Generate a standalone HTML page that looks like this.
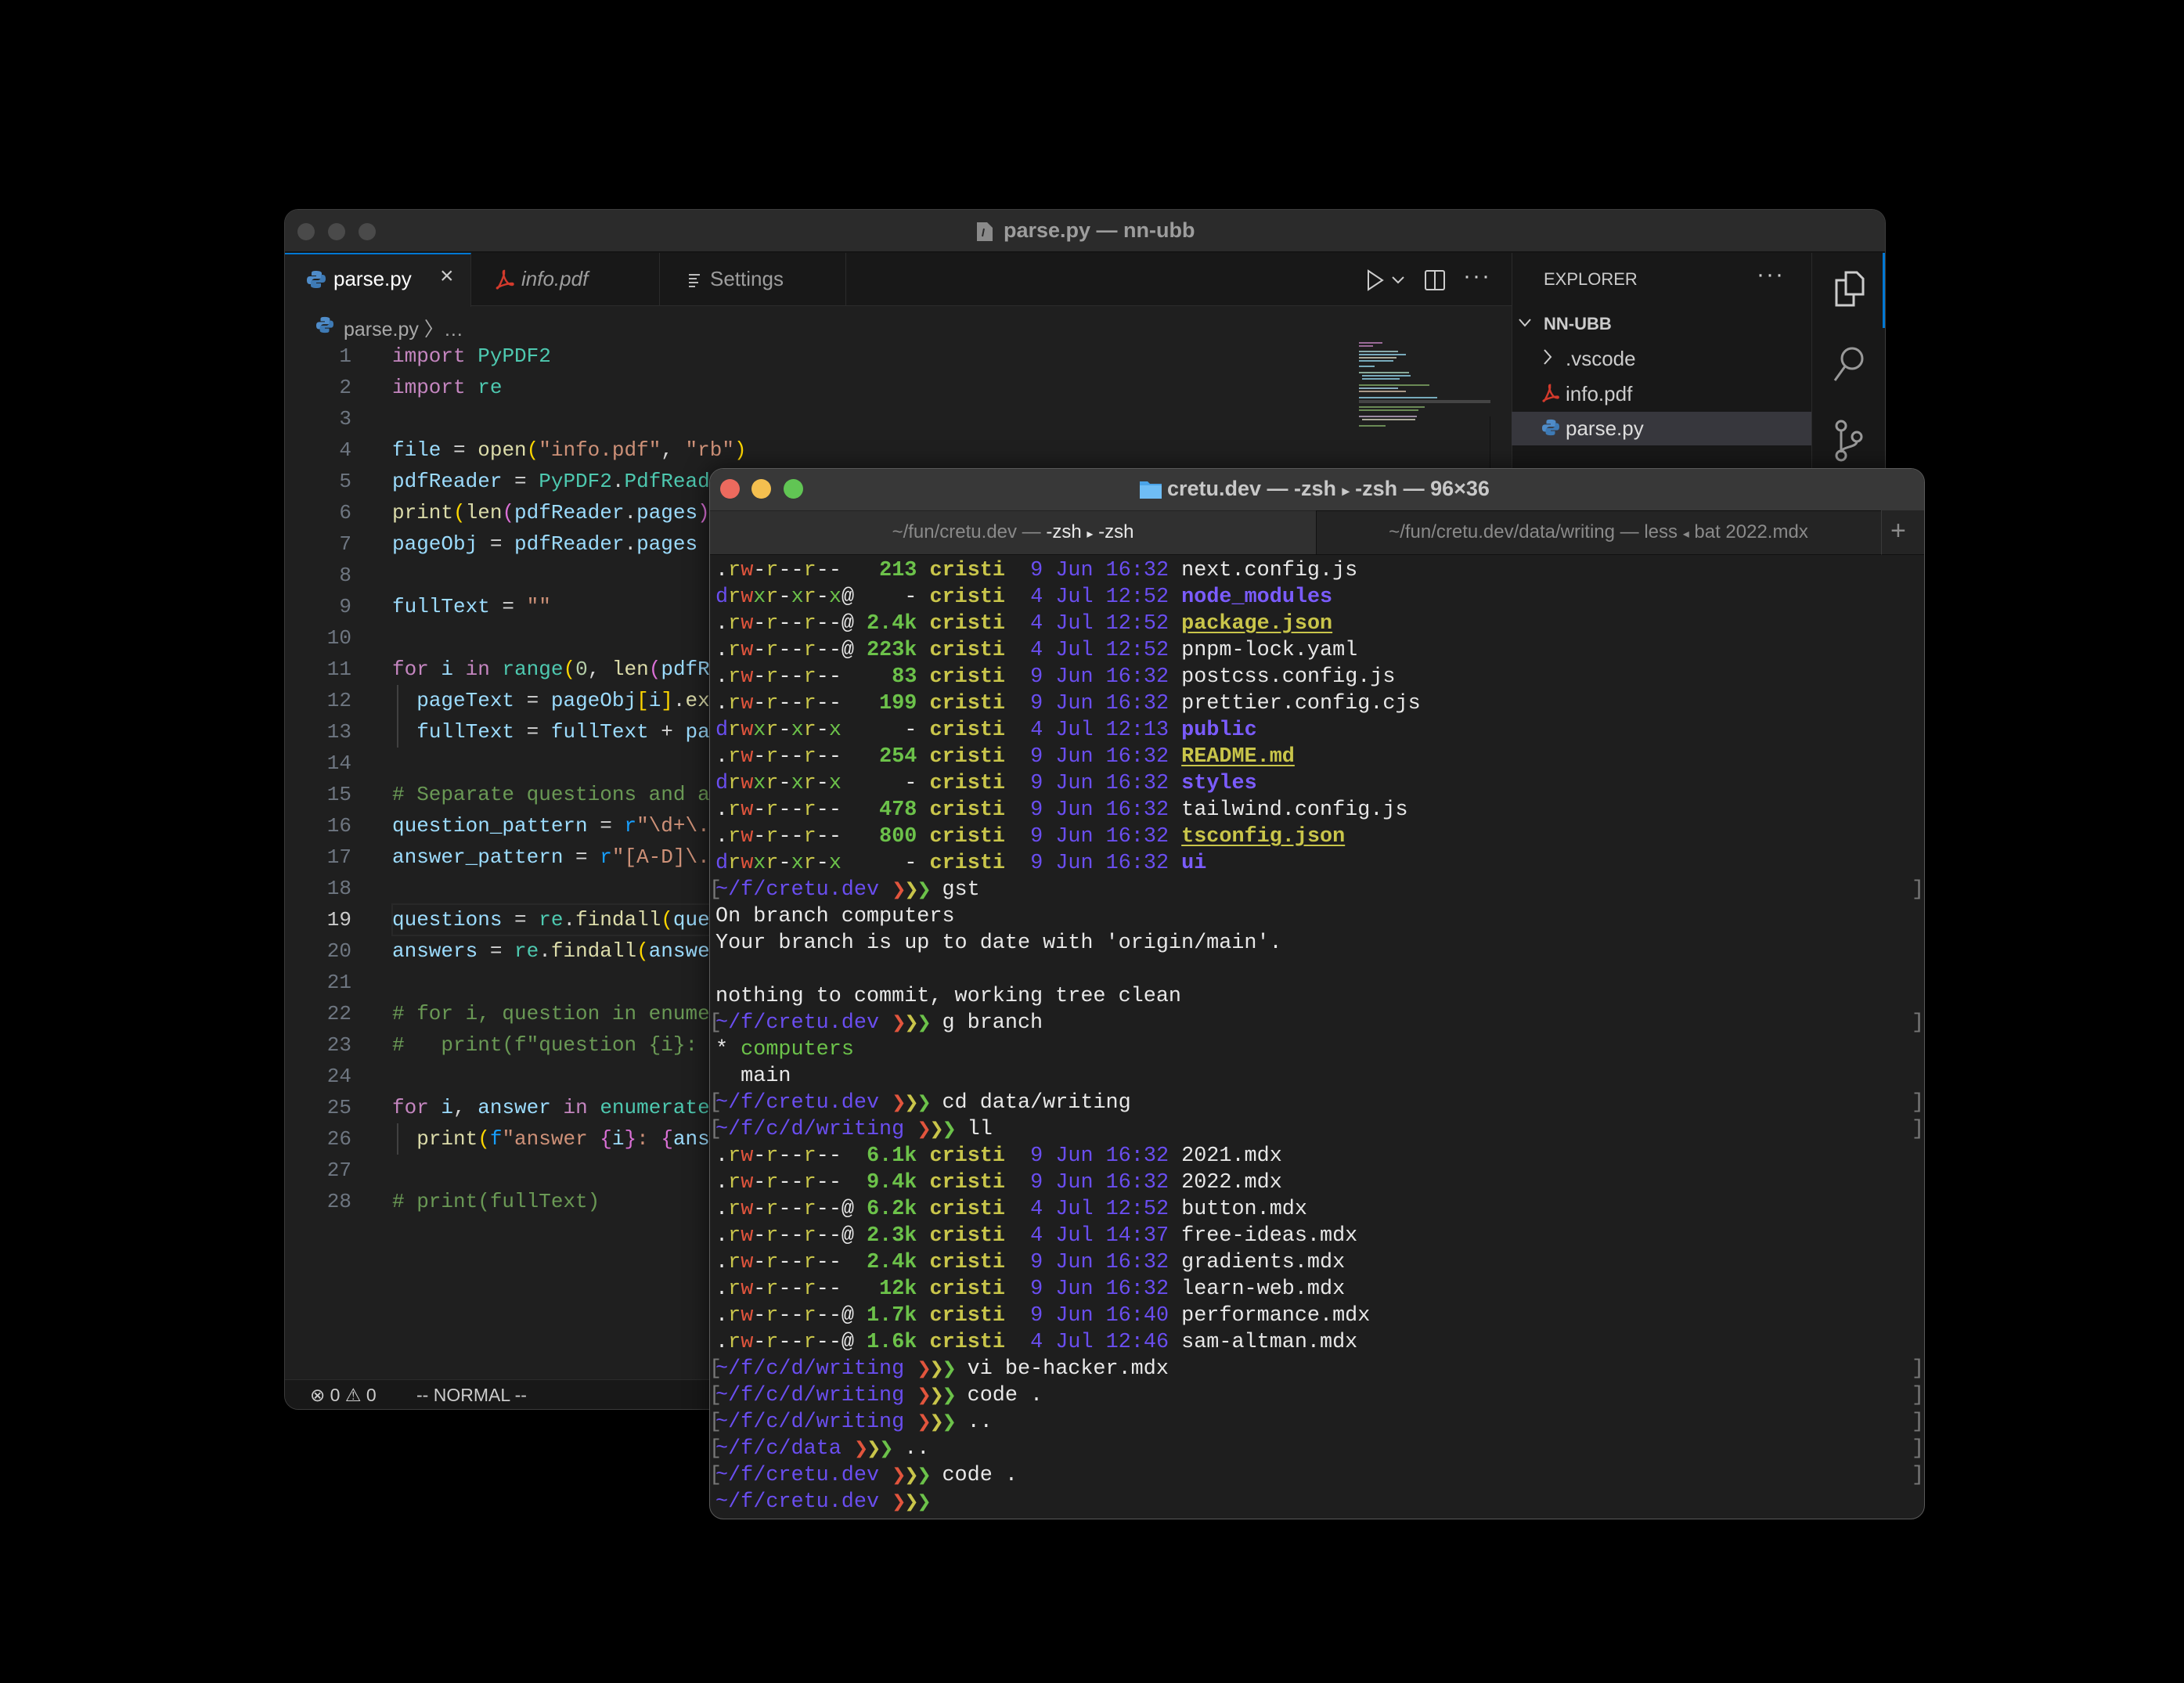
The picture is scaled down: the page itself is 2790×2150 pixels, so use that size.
<!DOCTYPE html>
<html><head><meta charset="utf-8"><style>
*{margin:0;padding:0;box-sizing:border-box}
body{width:2790px;height:2150px;background:#000;position:relative;overflow:hidden;font-family:"Liberation Sans",sans-serif}
.abs{position:absolute}
.mono{font-family:"Liberation Mono","DejaVu Sans Mono",monospace}
#vs{left:363px;top:267px;width:2046px;height:1534px;border-radius:18px;background:#1f1f1f;border:1px solid #3c3c3c;overflow:hidden}
.code{white-space:pre;font-size:26px;line-height:40px}
.k{color:#c586c0}.m{color:#4ec9b0}.v{color:#9cdcfe}.f{color:#dcdcaa}.s{color:#ce9178}.n{color:#b5cea8}.c{color:#6a9955}.o{color:#d4d4d4}.b1{color:#ffd700}.b2{color:#da70d6}.b3{color:#179fff}
#term{left:906px;top:598px;width:1553px;height:1343px;border-radius:18px;background:#1e1e1e;border:1px solid #5a5a5a;overflow:hidden;box-shadow:0 0 30px rgba(0,0,0,.6)}
.t{white-space:pre;font-size:26.8px;line-height:34px;color:#e8e8e8;height:34px;position:relative}
.Y{color:#c9c54a}.R{color:#e2553d}.G{color:#6cc24a}.P{color:#6a4ef0}.Q{color:#7b5cff;font-weight:bold}.S{color:#6cc24a;font-weight:bold}.U{color:#c9c54a;font-weight:bold}.L{color:#c9c54a;font-weight:bold;text-decoration:underline;text-underline-offset:4px}
.ch{display:inline-block;width:16.08px;text-align:center;font-family:"DejaVu Sans",sans-serif;font-size:22px}
.lb{position:absolute;left:-8px;color:#777}
.rb{position:absolute;left:1528px;color:#777}
</style></head><body>

<div id="vs" class="abs">
  <div class="abs" style="left:0;top:0;width:2046px;height:55px;background:#2b2b2b;border-bottom:2px solid #141414"></div>
  <div class="abs" style="left:16px;top:17px;width:22px;height:22px;border-radius:50%;background:#4a4a4a"></div>
  <div class="abs" style="left:55px;top:17px;width:22px;height:22px;border-radius:50%;background:#4a4a4a"></div>
  <div class="abs" style="left:94px;top:17px;width:22px;height:22px;border-radius:50%;background:#4a4a4a"></div>
  <svg class="abs" style="left:882px;top:14px" width="24" height="28" viewBox="0 0 24 28"><path d="M2 2h13l7 7v17H2z" fill="#8a8a8a"/><path d="M11 10l-2 10" stroke="#2b2b2b" stroke-width="2"/></svg>
  <div class="abs" style="left:918px;top:11px;font-size:27px;color:#9d9d9d;font-weight:bold">parse.py — nn-ubb</div>
  <div class="abs" style="left:0;top:55px;width:1567px;height:68px;background:#181818;border-bottom:1px solid #2b2b2b"></div>
  <div class="abs" style="left:0;top:55px;width:238px;height:69px;background:#1f1f1f;border-right:1px solid #2b2b2b;border-top:2px solid #0078d4"></div>
  <div class="abs" style="left:238px;top:55px;width:241px;height:68px;border-right:1px solid #2b2b2b"></div>
  <div class="abs" style="left:479px;top:55px;width:238px;height:68px;border-right:1px solid #2b2b2b"></div>
  <svg class="abs" style="left:28px;top:77px" width="24" height="24" viewBox="0 0 24 24"><path d="M11 1c-5 0-5 2-5 3v3h6v1H4C1 8 0 10 0 13s1 5 4 5h2v-3c0-2 2-4 4-4h6c2 0 3-1 3-3V4c0-2-3-3-8-3z" fill="#4f8cc9"/><path d="M13 23c5 0 5-2 5-3v-3h-6v-1h8c3 0 4-2 4-5s-1-5-4-5h-2v3c0 2-2 4-4 4H8c-2 0-3 1-3 3v4c0 2 3 3 8 3z" fill="#3e7ab5"/></svg>
  <div class="abs" style="left:62px;top:73px;font-size:26px;color:#fff">parse.py</div>
  <div class="abs" style="left:198px;top:68px;font-size:30px;color:#ccc">×</div>
  <svg class="abs" style="left:268px;top:76px" width="26" height="26" viewBox="0 0 26 26"><path d="M12 2c-2 0-1 6 1 10s5 8 9 8c2 0 2-2 0-2-4 0-12 2-18 5-2 1-1 2 0 1 3-4 7-14 8-18 0-3 0-4 0-4z" fill="none" stroke="#d33a2c" stroke-width="2.4"/></svg>
  <div class="abs" style="left:302px;top:73px;font-size:26px;color:#9d9d9d;font-style:italic">info.pdf</div>
  <svg class="abs" style="left:514px;top:80px" width="20" height="20" viewBox="0 0 20 20"><path d="M2 3h14M2 8h10M2 13h12M2 18h8" stroke="#bbb" stroke-width="2"/></svg>
  <div class="abs" style="left:543px;top:73px;font-size:26px;color:#9d9d9d">Settings</div>
  <svg class="abs" style="left:1378px;top:75px" width="30" height="30" viewBox="0 0 30 30"><path d="M6 3l18 12-18 12z" fill="none" stroke="#ccc" stroke-width="2"/></svg>
  <svg class="abs" style="left:1413px;top:82px" width="18" height="14" viewBox="0 0 18 14"><path d="M2 4l7 7 7-7" fill="none" stroke="#ccc" stroke-width="2"/></svg>
  <svg class="abs" style="left:1455px;top:76px" width="28" height="28" viewBox="0 0 28 28"><rect x="2" y="2" width="24" height="24" rx="2" fill="none" stroke="#ccc" stroke-width="2"/><path d="M14 2v24" stroke="#ccc" stroke-width="2"/></svg>
  <div class="abs" style="left:1505px;top:68px;font-size:30px;color:#ccc;letter-spacing:2px">···</div>
  <svg class="abs" style="left:40px;top:136px" width="22" height="22" viewBox="0 0 24 24"><path d="M11 1c-5 0-5 2-5 3v3h6v1H4C1 8 0 10 0 13s1 5 4 5h2v-3c0-2 2-4 4-4h6c2 0 3-1 3-3V4c0-2-3-3-8-3z" fill="#4f8cc9"/><path d="M13 23c5 0 5-2 5-3v-3h-6v-1h8c3 0 4-2 4-5s-1-5-4-5h-2v3c0 2-2 4-4 4H8c-2 0-3 1-3 3v4c0 2 3 3 8 3z" fill="#3e7ab5"/></svg>
  <div class="abs" style="left:75px;top:133px;font-size:25px;color:#a9a9a9">parse.py 〉…</div>
  <div class="abs" style="left:136px;top:886px;width:1430px;height:42px;border:2px solid #282828"></div>
  <div class="abs" style="left:143px;top:607px;width:2px;height:80px;background:#404040"></div>
  <div class="abs" style="left:143px;top:1167px;width:2px;height:40px;background:#404040"></div>
  <div class="abs mono code" style="left:17px;top:167px;width:68px;text-align:right;color:#6e7681">1
2
3
4
5
6
7
8
9
10
11
12
13
14
15
16
17
18
<span style="color:#ccc">19</span>
20
21
22
23
24
25
26
27
28</div>
  <div class="abs mono code" style="left:137px;top:167px;color:#d4d4d4"><span class="k">import</span> <span class="m">PyPDF2</span>
<span class="k">import</span> <span class="m">re</span>

<span class="v">file</span> = <span class="f">open</span><span class="b1">(</span><span class="s">"info.pdf"</span>, <span class="s">"rb"</span><span class="b1">)</span>
<span class="v">pdfReader</span> = <span class="m">PyPDF2</span>.<span class="m">PdfReader</span><span class="b1">(</span><span class="v">file</span><span class="b1">)</span>
<span class="f">print</span><span class="b1">(</span><span class="f">len</span><span class="b2">(</span><span class="v">pdfReader</span>.<span class="v">pages</span><span class="b2">)</span><span class="b1">)</span>
<span class="v">pageObj</span> = <span class="v">pdfReader</span>.<span class="v">pages</span>

<span class="v">fullText</span> = <span class="s">""</span>

<span class="k">for</span> <span class="v">i</span> <span class="k">in</span> <span class="m">range</span><span class="b1">(</span><span class="n">0</span>, <span class="f">len</span><span class="b2">(</span><span class="v">pdfReader</span>.<span class="v">pages</span><span class="b2">)</span><span class="b1">)</span>:
  <span class="v">pageText</span> = <span class="v">pageObj</span><span class="b1">[</span><span class="v">i</span><span class="b1">]</span>.<span class="f">extract_text</span><span class="b1">()</span>
  <span class="v">fullText</span> = <span class="v">fullText</span> + <span class="v">pageText</span>

<span class="c"># Separate questions and answers using regex patterns</span>
<span class="v">question_pattern</span> = <span class="b3">r</span><span class="s">"\d+\..*?"</span>
<span class="v">answer_pattern</span> = <span class="b3">r</span><span class="s">"[A-D]\..*?"</span>

<span class="v">questions</span> = <span class="m">re</span>.<span class="f">findall</span><span class="b1">(</span><span class="v">question_pattern</span>, <span class="v">fullText</span><span class="b1">)</span>
<span class="v">answers</span> = <span class="m">re</span>.<span class="f">findall</span><span class="b1">(</span><span class="v">answer_pattern</span>, <span class="v">fullText</span><span class="b1">)</span>

<span class="c"># for i, question in enumerate(questions, start=1):</span>
<span class="c">#   print(f"question {i}: {question.strip()}\n")</span>

<span class="k">for</span> <span class="v">i</span>, <span class="v">answer</span> <span class="k">in</span> <span class="m">enumerate</span><span class="b1">(</span><span class="v">answers</span>, <span class="v">start</span>=<span class="n">1</span><span class="b1">)</span>:
  <span class="f">print</span><span class="b1">(</span><span class="b3">f</span><span class="s">"answer </span><span class="b2">{</span><span class="v">i</span><span class="b2">}</span><span class="s">: </span><span class="b2">{</span><span class="v">answer</span>.<span class="f">strip</span><span class="b2">}</span><span class="s">\n"</span><span class="b1">)</span>

<span class="c"># print(fullText)</span></div>
  <div class="abs" style="left:1372px;top:169px;width:168px;height:120px">
    <div class="abs" style="left:0;top:0;width:30px;height:2px;background:#9a6a98"></div>
    <div class="abs" style="left:0;top:4px;width:18px;height:2px;background:#9a6a98"></div>
    <div class="abs" style="left:0;top:11px;width:50px;height:2px;background:#8aa"></div>
    <div class="abs" style="left:0;top:15px;width:60px;height:2px;background:#7ab"></div>
    <div class="abs" style="left:0;top:19px;width:48px;height:2px;background:#aa9"></div>
    <div class="abs" style="left:0;top:23px;width:44px;height:2px;background:#7ab"></div>
    <div class="abs" style="left:0;top:30px;width:20px;height:2px;background:#7ab"></div>
    <div class="abs" style="left:0;top:38px;width:64px;height:2px;background:#8a9"></div>
    <div class="abs" style="left:4px;top:42px;width:62px;height:2px;background:#7ab"></div>
    <div class="abs" style="left:4px;top:46px;width:48px;height:2px;background:#7ab"></div>
    <div class="abs" style="left:0;top:54px;width:90px;height:2px;background:#6a8a55"></div>
    <div class="abs" style="left:0;top:58px;width:50px;height:2px;background:#8ab"></div>
    <div class="abs" style="left:0;top:62px;width:60px;height:2px;background:#a98"></div>
    <div class="abs" style="left:0;top:70px;width:100px;height:2px;background:#7ab"></div>
    <div class="abs" style="left:0;top:74px;width:168px;height:4px;background:#444"></div>
    <div class="abs" style="left:0;top:82px;width:84px;height:2px;background:#6a8a55"></div>
    <div class="abs" style="left:0;top:86px;width:76px;height:2px;background:#6a8a55"></div>
    <div class="abs" style="left:0;top:94px;width:74px;height:2px;background:#9a8aa0"></div>
    <div class="abs" style="left:4px;top:98px;width:68px;height:2px;background:#aa9"></div>
    <div class="abs" style="left:0;top:106px;width:34px;height:2px;background:#6a8a55"></div>
  </div>
  <div class="abs" style="left:1539px;top:264px;width:28px;height:1230px;border-left:1px solid #111"></div>
  <div class="abs" style="left:1567px;top:55px;width:383px;height:1439px;background:#181818;border-left:1px solid #2b2b2b"></div>
  <div class="abs" style="left:1608px;top:76px;font-size:22px;color:#ccc">EXPLORER</div>
  <div class="abs" style="left:1880px;top:66px;font-size:30px;color:#ccc;letter-spacing:2px">···</div>
  <svg class="abs" style="left:1575px;top:137px" width="18" height="14" viewBox="0 0 18 14"><path d="M2 3l7 8 7-8" fill="none" stroke="#ccc" stroke-width="2"/></svg>
  <div class="abs" style="left:1608px;top:133px;font-size:22px;color:#ccc;font-weight:bold">NN-UBB</div>
  <svg class="abs" style="left:1607px;top:177px" width="12" height="22" viewBox="0 0 12 22"><path d="M2 2l8 9-8 9" fill="none" stroke="#ccc" stroke-width="2"/></svg>
  <div class="abs" style="left:1636px;top:175px;font-size:26px;color:#ccc">.vscode</div>
  <svg class="abs" style="left:1605px;top:222px" width="24" height="24" viewBox="0 0 26 26"><path d="M12 2c-2 0-1 6 1 10s5 8 9 8c2 0 2-2 0-2-4 0-12 2-18 5-2 1-1 2 0 1 3-4 7-14 8-18 0-3 0-4 0-4z" fill="none" stroke="#d33a2c" stroke-width="2.6"/></svg>
  <div class="abs" style="left:1636px;top:220px;font-size:26px;color:#ccc">info.pdf</div>
  <div class="abs" style="left:1567px;top:258px;width:383px;height:43px;background:#37373d"></div>
  <svg class="abs" style="left:1606px;top:267px" width="22" height="22" viewBox="0 0 24 24"><path d="M11 1c-5 0-5 2-5 3v3h6v1H4C1 8 0 10 0 13s1 5 4 5h2v-3c0-2 2-4 4-4h6c2 0 3-1 3-3V4c0-2-3-3-8-3z" fill="#4f8cc9"/><path d="M13 23c5 0 5-2 5-3v-3h-6v-1h8c3 0 4-2 4-5s-1-5-4-5h-2v3c0 2-2 4-4 4H8c-2 0-3 1-3 3v4c0 2 3 3 8 3z" fill="#3e7ab5"/></svg>
  <div class="abs" style="left:1636px;top:264px;font-size:26px;color:#ddd">parse.py</div>
  <div class="abs" style="left:1950px;top:55px;width:96px;height:1439px;background:#181818;border-left:1px solid #2b2b2b"></div>
  <div class="abs" style="left:2041px;top:55px;width:4px;height:96px;background:#0078d4"></div>
  <svg class="abs" style="left:1974px;top:76px" width="48" height="50" viewBox="0 0 48 50"><path d="M20 4h14l8 8v20H20z" fill="none" stroke="#ccc" stroke-width="3"/><path d="M20 14H8v32h22v-14" fill="none" stroke="#ccc" stroke-width="3"/></svg>
  <svg class="abs" style="left:1974px;top:172px" width="48" height="52" viewBox="0 0 48 52"><circle cx="28" cy="18" r="13" fill="none" stroke="#999" stroke-width="3"/><path d="M19 28L6 46" stroke="#999" stroke-width="3"/></svg>
  <svg class="abs" style="left:1974px;top:268px" width="48" height="56" viewBox="0 0 48 56"><circle cx="14" cy="8" r="6" fill="none" stroke="#999" stroke-width="3"/><circle cx="34" cy="22" r="6" fill="none" stroke="#999" stroke-width="3"/><circle cx="14" cy="46" r="6" fill="none" stroke="#999" stroke-width="3"/><path d="M14 14v26M34 28c0 8-20 6-20 14" fill="none" stroke="#999" stroke-width="3"/></svg>
  <div class="abs" style="left:0;top:1494px;width:2046px;height:40px;background:#181818;border-top:1px solid #2b2b2b"></div>
  <div class="abs" style="left:32px;top:1501px;font-size:23px;color:#ccc;white-space:pre">⊗ 0 ⚠ 0</div>
  <div class="abs" style="left:168px;top:1501px;font-size:23px;color:#ccc">-- NORMAL --</div>
</div>

<div id="term" class="abs">
  <div class="abs" style="left:0;top:0;width:1553px;height:53px;background:#383838"></div>
  <div class="abs" style="left:13px;top:13px;width:25px;height:25px;border-radius:50%;background:#ec6a5e"></div>
  <div class="abs" style="left:53px;top:13px;width:25px;height:25px;border-radius:50%;background:#f4bf4f"></div>
  <div class="abs" style="left:94px;top:13px;width:25px;height:25px;border-radius:50%;background:#61c554"></div>
  <svg class="abs" style="left:548px;top:12px" width="30" height="28" viewBox="0 0 30 28"><path d="M1 4h10l3 3h15v19H1z" fill="#4aa3e8"/><path d="M1 9h28v17H1z" fill="#6fbdf5"/></svg>
  <div class="abs" style="left:584px;top:10px;font-size:27px;color:#c8c8c8;font-weight:bold;white-space:pre">cretu.dev — -zsh <span style="font-size:18px">▸</span> -zsh — 96×36</div>
  <div class="abs" style="left:0;top:53px;width:774px;height:57px;background:#303030;border-top:1px solid #222;border-bottom:1px solid #111"></div>
  <div class="abs" style="left:774px;top:53px;width:722px;height:57px;background:#242424;border-top:1px solid #111;border-left:1px solid #111;border-bottom:1px solid #111"></div>
  <div class="abs" style="left:1496px;top:53px;width:57px;height:57px;background:#242424;border-left:1px solid #3a3a3a;border-bottom:1px solid #111"></div>
  <div class="abs" style="left:0;top:67px;width:774px;text-align:center;font-size:24px;color:#8a8a8a;white-space:pre">~/fun/cretu.dev — <span style="color:#e8e8e8">-zsh <span style="font-size:16px">▸</span> -zsh</span></div>
  <div class="abs" style="left:774px;top:67px;width:722px;text-align:center;font-size:24px;color:#8a8a8a;white-space:pre">~/fun/cretu.dev/data/writing — less <span style="font-size:16px">◂</span> bat 2022.mdx</div>
  <div class="abs" style="left:1508px;top:60px;font-size:34px;color:#8a8a8a">+</div>
  <div class="abs mono" style="left:7px;top:113px">
<div class="t">.<span class=Y>r</span><span class=R>w</span>-<span class=Y>r</span>--<span class=Y>r</span>--   <span class=S>213</span> <span class=U>cristi</span>  <span class=P>9 Jun 16:32</span> next.config.js</div>
<div class="t"><span class=P>d</span><span class=Y>r</span><span class=R>w</span><span class=G>x</span><span class=Y>r</span>-<span class=G>x</span><span class=Y>r</span>-<span class=G>x</span>@    - <span class=U>cristi</span>  <span class=P>4 Jul 12:52</span> <span class=Q>node_modules</span></div>
<div class="t">.<span class=Y>r</span><span class=R>w</span>-<span class=Y>r</span>--<span class=Y>r</span>--@ <span class=S>2.4k</span> <span class=U>cristi</span>  <span class=P>4 Jul 12:52</span> <span class=L>package.json</span></div>
<div class="t">.<span class=Y>r</span><span class=R>w</span>-<span class=Y>r</span>--<span class=Y>r</span>--@ <span class=S>223k</span> <span class=U>cristi</span>  <span class=P>4 Jul 12:52</span> pnpm-lock.yaml</div>
<div class="t">.<span class=Y>r</span><span class=R>w</span>-<span class=Y>r</span>--<span class=Y>r</span>--    <span class=S>83</span> <span class=U>cristi</span>  <span class=P>9 Jun 16:32</span> postcss.config.js</div>
<div class="t">.<span class=Y>r</span><span class=R>w</span>-<span class=Y>r</span>--<span class=Y>r</span>--   <span class=S>199</span> <span class=U>cristi</span>  <span class=P>9 Jun 16:32</span> prettier.config.cjs</div>
<div class="t"><span class=P>d</span><span class=Y>r</span><span class=R>w</span><span class=G>x</span><span class=Y>r</span>-<span class=G>x</span><span class=Y>r</span>-<span class=G>x</span>     - <span class=U>cristi</span>  <span class=P>4 Jul 12:13</span> <span class=Q>public</span></div>
<div class="t">.<span class=Y>r</span><span class=R>w</span>-<span class=Y>r</span>--<span class=Y>r</span>--   <span class=S>254</span> <span class=U>cristi</span>  <span class=P>9 Jun 16:32</span> <span class=L>README.md</span></div>
<div class="t"><span class=P>d</span><span class=Y>r</span><span class=R>w</span><span class=G>x</span><span class=Y>r</span>-<span class=G>x</span><span class=Y>r</span>-<span class=G>x</span>     - <span class=U>cristi</span>  <span class=P>9 Jun 16:32</span> <span class=Q>styles</span></div>
<div class="t">.<span class=Y>r</span><span class=R>w</span>-<span class=Y>r</span>--<span class=Y>r</span>--   <span class=S>478</span> <span class=U>cristi</span>  <span class=P>9 Jun 16:32</span> tailwind.config.js</div>
<div class="t">.<span class=Y>r</span><span class=R>w</span>-<span class=Y>r</span>--<span class=Y>r</span>--   <span class=S>800</span> <span class=U>cristi</span>  <span class=P>9 Jun 16:32</span> <span class=L>tsconfig.json</span></div>
<div class="t"><span class=P>d</span><span class=Y>r</span><span class=R>w</span><span class=G>x</span><span class=Y>r</span>-<span class=G>x</span><span class=Y>r</span>-<span class=G>x</span>     - <span class=U>cristi</span>  <span class=P>9 Jun 16:32</span> <span class=Q>ui</span></div>
<div class="t"><span class=lb>[</span><span class=P>~/f/cretu.dev</span> <span class="ch R">❯</span><span class="ch Y">❯</span><span class="ch G">❯</span> gst<span class=rb>]</span></div>
<div class="t">On branch computers</div>
<div class="t">Your branch is up to date with 'origin/main'.</div>
<div class="t"> </div>
<div class="t">nothing to commit, working tree clean</div>
<div class="t"><span class=lb>[</span><span class=P>~/f/cretu.dev</span> <span class="ch R">❯</span><span class="ch Y">❯</span><span class="ch G">❯</span> g branch<span class=rb>]</span></div>
<div class="t">* <span class=G>computers</span></div>
<div class="t">  main</div>
<div class="t"><span class=lb>[</span><span class=P>~/f/cretu.dev</span> <span class="ch R">❯</span><span class="ch Y">❯</span><span class="ch G">❯</span> cd data/writing<span class=rb>]</span></div>
<div class="t"><span class=lb>[</span><span class=P>~/f/c/d/writing</span> <span class="ch R">❯</span><span class="ch Y">❯</span><span class="ch G">❯</span> ll<span class=rb>]</span></div>
<div class="t">.<span class=Y>r</span><span class=R>w</span>-<span class=Y>r</span>--<span class=Y>r</span>--  <span class=S>6.1k</span> <span class=U>cristi</span>  <span class=P>9 Jun 16:32</span> 2021.mdx</div>
<div class="t">.<span class=Y>r</span><span class=R>w</span>-<span class=Y>r</span>--<span class=Y>r</span>--  <span class=S>9.4k</span> <span class=U>cristi</span>  <span class=P>9 Jun 16:32</span> 2022.mdx</div>
<div class="t">.<span class=Y>r</span><span class=R>w</span>-<span class=Y>r</span>--<span class=Y>r</span>--@ <span class=S>6.2k</span> <span class=U>cristi</span>  <span class=P>4 Jul 12:52</span> button.mdx</div>
<div class="t">.<span class=Y>r</span><span class=R>w</span>-<span class=Y>r</span>--<span class=Y>r</span>--@ <span class=S>2.3k</span> <span class=U>cristi</span>  <span class=P>4 Jul 14:37</span> free-ideas.mdx</div>
<div class="t">.<span class=Y>r</span><span class=R>w</span>-<span class=Y>r</span>--<span class=Y>r</span>--  <span class=S>2.4k</span> <span class=U>cristi</span>  <span class=P>9 Jun 16:32</span> gradients.mdx</div>
<div class="t">.<span class=Y>r</span><span class=R>w</span>-<span class=Y>r</span>--<span class=Y>r</span>--   <span class=S>12k</span> <span class=U>cristi</span>  <span class=P>9 Jun 16:32</span> learn-web.mdx</div>
<div class="t">.<span class=Y>r</span><span class=R>w</span>-<span class=Y>r</span>--<span class=Y>r</span>--@ <span class=S>1.7k</span> <span class=U>cristi</span>  <span class=P>9 Jun 16:40</span> performance.mdx</div>
<div class="t">.<span class=Y>r</span><span class=R>w</span>-<span class=Y>r</span>--<span class=Y>r</span>--@ <span class=S>1.6k</span> <span class=U>cristi</span>  <span class=P>4 Jul 12:46</span> sam-altman.mdx</div>
<div class="t"><span class=lb>[</span><span class=P>~/f/c/d/writing</span> <span class="ch R">❯</span><span class="ch Y">❯</span><span class="ch G">❯</span> vi be-hacker.mdx<span class=rb>]</span></div>
<div class="t"><span class=lb>[</span><span class=P>~/f/c/d/writing</span> <span class="ch R">❯</span><span class="ch Y">❯</span><span class="ch G">❯</span> code .<span class=rb>]</span></div>
<div class="t"><span class=lb>[</span><span class=P>~/f/c/d/writing</span> <span class="ch R">❯</span><span class="ch Y">❯</span><span class="ch G">❯</span> ..<span class=rb>]</span></div>
<div class="t"><span class=lb>[</span><span class=P>~/f/c/data</span> <span class="ch R">❯</span><span class="ch Y">❯</span><span class="ch G">❯</span> ..<span class=rb>]</span></div>
<div class="t"><span class=lb>[</span><span class=P>~/f/cretu.dev</span> <span class="ch R">❯</span><span class="ch Y">❯</span><span class="ch G">❯</span> code .<span class=rb>]</span></div>
<div class="t"><span class=P>~/f/cretu.dev</span> <span class="ch R">❯</span><span class="ch Y">❯</span><span class="ch G">❯</span></div>
  </div>
</div>
</body></html>
